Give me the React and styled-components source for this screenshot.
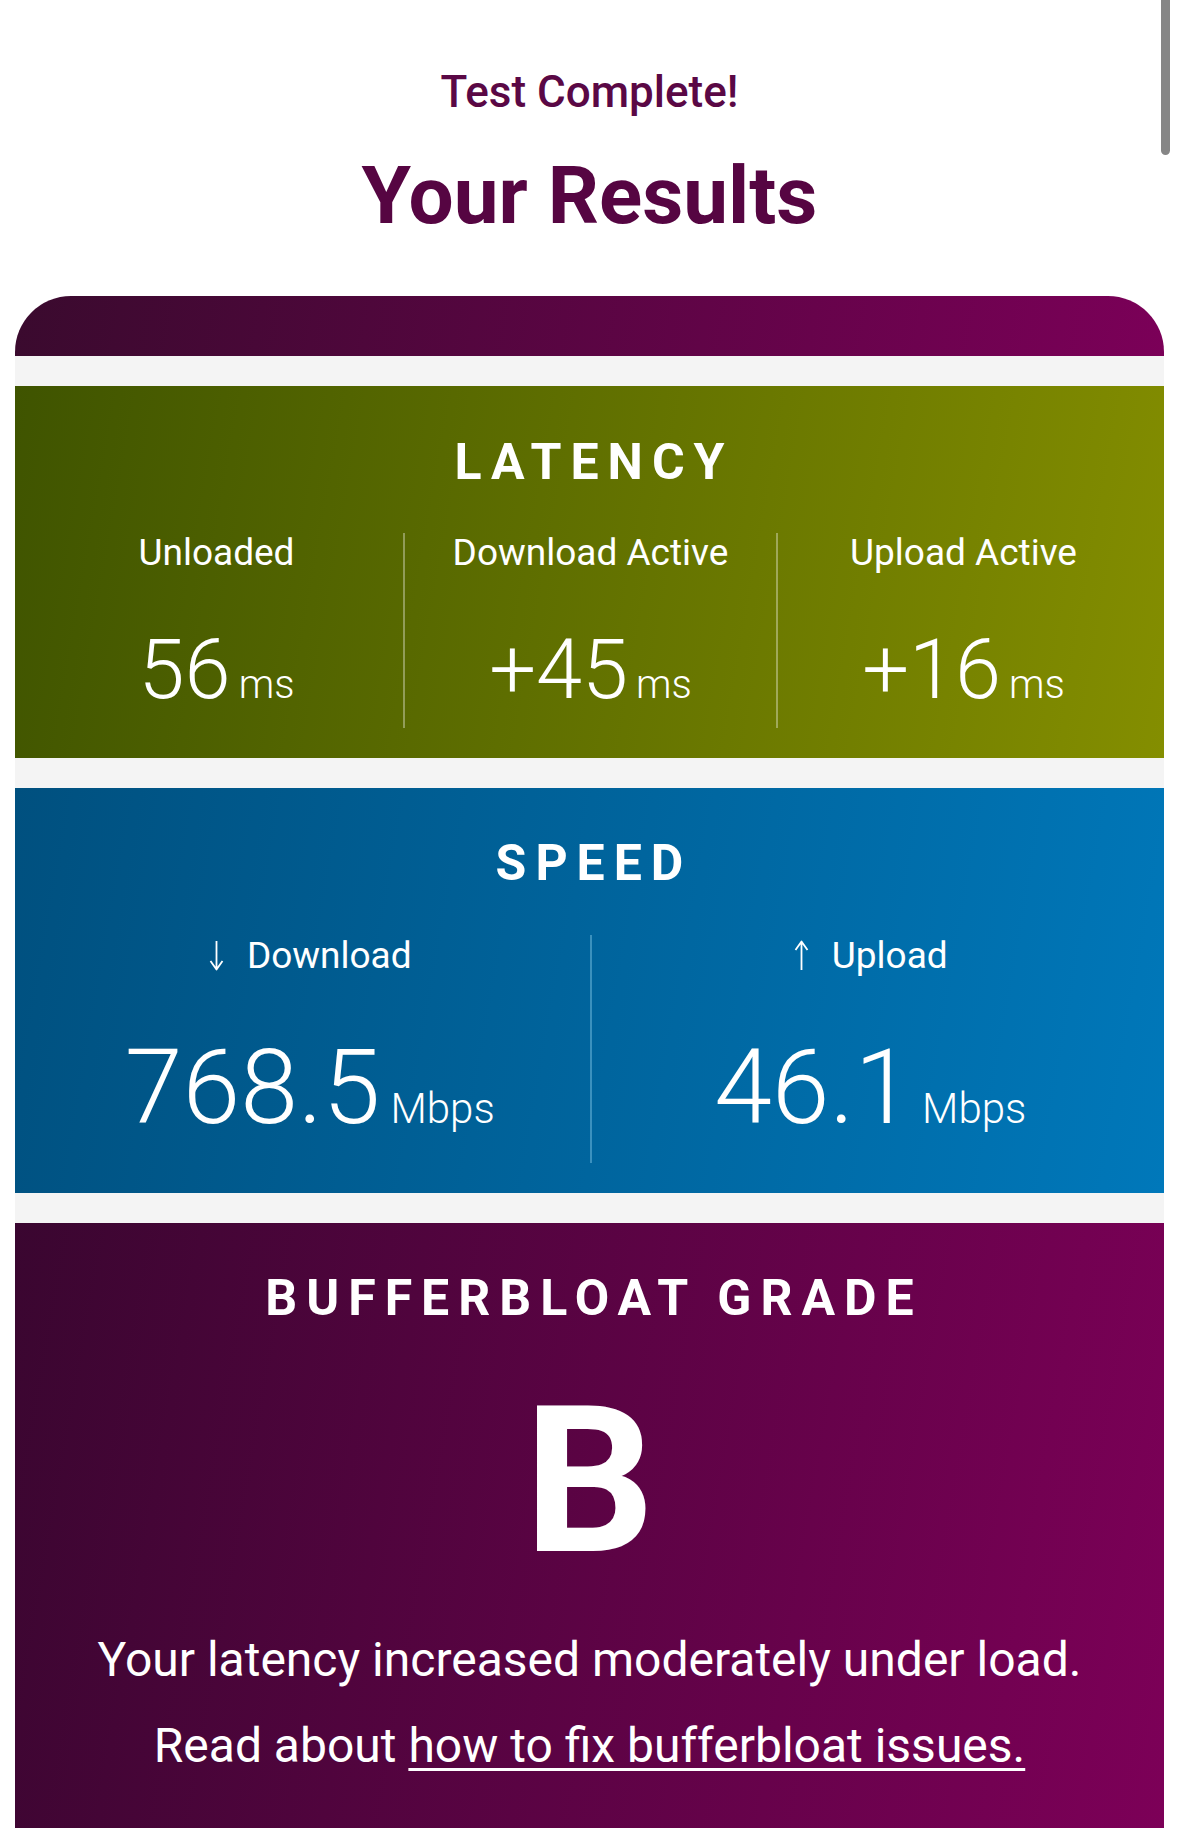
import React from "react";
import styled, { createGlobalStyle } from "styled-components";

const GlobalStyle = createGlobalStyle`
	html, body {
		margin: 0;
		padding: 0;
		overflow: hidden;
		background: #fff;
		font-family: Roboto, "Liberation Sans", Arial, sans-serif;
	}
`;

const Page = styled.div`
	padding: 70px 15px 0;
`;

const Subtitle = styled.div`
	font-size: 44px;
	font-weight: 500;
	line-height: 1;
	color: #5a0845;
	text-align: center;
`;

const Title = styled.h1`
	margin: 41.5px 0 0;
	font-size: 80px;
	font-weight: 700;
	line-height: 1;
	color: #560542;
	text-align: center;
`;

const Card = styled.div`
	margin-top: 60.5px;
`;

const CardCap = styled.div`
	height: 60px;
	border-radius: 56px 56px 0 0;
	background: linear-gradient(100deg, #3a0a2e 0%, #7b0058 100%);
`;

const Stack = styled.div`
	display: flex;
	flex-direction: column;
	gap: 30px;
	padding-top: 30px;
	background: #f4f4f4;
`;

const Panel = styled.section`
	padding: ${(p) => p.$top}px 15px ${(p) => p.$bottom}px;
	background: ${(p) => p.$bg};
	color: #fff;
`;

const Heading = styled.h2`
	margin: 0;
	padding-left: 9px;
	font-size: 50px;
	font-weight: 700;
	letter-spacing: 9px;
	line-height: 1;
	text-align: center;
`;

const Columns = styled.div`
	display: grid;
	grid-template-columns: repeat(${(p) => p.$count}, 1fr);
	margin-top: ${(p) => p.$gap}px;
`;

const Column = styled.div`
	text-align: center;
	padding-bottom: ${(p) => p.$pad}px;
	border-left: ${(p) => (p.$first ? "none" : `2px solid ${p.$line}`)};
`;

const Label = styled.div`
	display: flex;
	align-items: center;
	justify-content: center;
	gap: 22px;
	margin-top: ${(p) => p.$offset}px;
	height: 37px;
	font-size: 37px;
	font-weight: 400;
	line-height: 1;
`;

const Value = styled.div`
	margin-top: ${(p) => p.$gap}px;
	font-size: ${(p) => p.$size}px;
	font-weight: 300;
	line-height: 1;
	white-space: nowrap;
`;

const Unit = styled.span`
	margin-left: ${(p) => p.$gap}px;
	font-size: ${(p) => p.$size}px;
	font-weight: 300;
`;

const Grade = styled.div`
	margin-top: 55.5px;
	font-size: 205px;
	font-weight: 700;
	line-height: 1;
	text-align: center;
`;

const Message = styled.p`
	margin: 0;
	font-size: 48px;
	font-weight: 400;
	line-height: 86px;
	text-align: center;
	&:first-of-type {
		margin-top: 32.6px;
	}
`;

const FixLink = styled.a`
	color: #fff;
	text-decoration: underline;
	text-decoration-thickness: 3px;
	text-underline-offset: 6px;
`;

const ScrollThumb = styled.div`
	position: fixed;
	top: 0;
	right: 9px;
	width: 9px;
	height: 155px;
	background: #868686;
	border-radius: 0 0 5px 5px;
`;

function Arrow({ up }) {
	return (
		<svg width='17' height='31' viewBox='0 0 17 31' fill='none'>
			{up ? (
				<path
					d='M8.5 30V1.5M2.5 10L8.5 1.5L14.5 10'
					stroke='#fff'
					strokeWidth='1.8'
					strokeLinejoin='round'
				/>
			) : (
				<path
					d='M8.5 1V29.5M2.5 21L8.5 29.5L14.5 21'
					stroke='#fff'
					strokeWidth='1.8'
					strokeLinejoin='round'
				/>
			)}
		</svg>
	);
}

const latency = [
	{ label: "Unloaded", value: "56" },
	{ label: "Download Active", value: "+45" },
	{ label: "Upload Active", value: "+16" },
];

const speed = [
	{ label: "Download", value: "768.5", up: false },
	{ label: "Upload", value: "46.1", up: true },
];

export default function App() {
	return (
		<>
			<GlobalStyle />
			<ScrollThumb />
			<Page>
				<Subtitle>Test Complete!</Subtitle>
				<Title>Your Results</Title>
				<Card>
					<CardCap />
					<Stack>
						<Panel
							$top={50.5}
							$bottom={30}
							$bg='linear-gradient(100deg, #3f5400 0%, #848e00 100%)'>
							<Heading>LATENCY</Heading>
							<Columns $count={3} $gap={46.5}>
								{latency.map((item, i) => (
									<Column
										key={item.label}
										$first={i === 0}
										$pad={17}
										$line='rgba(255, 255, 255, 0.35)'>
										<Label $offset={1}>{item.label}</Label>
										<Value $gap={57} $size={83}>
											{item.value}
											<Unit $gap={8} $size={40}>
												ms
											</Unit>
										</Value>
									</Column>
								))}
							</Columns>
						</Panel>
						<Panel
							$top={49.5}
							$bottom={30}
							$bg='linear-gradient(100deg, #00507f 0%, #0078ba 100%)'>
							<Heading>SPEED</Heading>
							<Columns $count={2} $gap={47.5}>
								{speed.map((item, i) => (
									<Column
										key={item.label}
										$first={i === 0}
										$pad={22.6}
										$line='rgba(130, 200, 230, 0.45)'>
										<Label $offset={2}>
											<Arrow up={item.up} />
											{item.label}
										</Label>
										<Value $gap={62.4} $size={104}>
											{item.value}
											<Unit $gap={10} $size={42}>
												Mbps
											</Unit>
										</Value>
									</Column>
								))}
							</Columns>
						</Panel>
						<Panel
							$top={50.5}
							$bottom={80}
							$bg='linear-gradient(100deg, #3a0630 0%, #7d0058 100%)'>
							<Heading>BUFFERBLOAT GRADE</Heading>
							<Grade>B</Grade>
							<Message>Your latency increased moderately under load.</Message>
							<Message>
								Read about{" "}
								<FixLink href='#'>how to fix bufferbloat issues.</FixLink>
							</Message>
						</Panel>
					</Stack>
				</Card>
			</Page>
		</>
	);
}
